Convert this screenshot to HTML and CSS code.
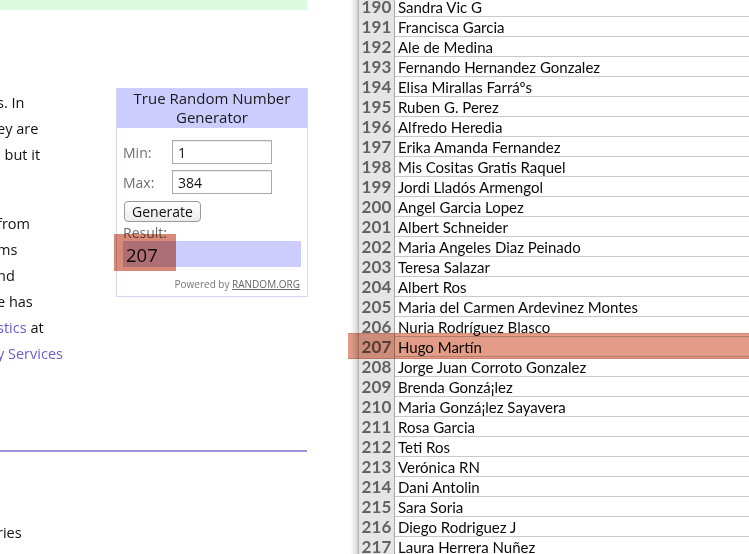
FILE: index.html
```html
<!DOCTYPE html>
<html lang="es">
<head>
<meta charset="utf-8">
<title>Sorteo</title>
<link rel="stylesheet" href="styles.css">
</head>
<body>
<div class="screen">
  <section class="page">
    <div class="notice"></div>
    <div class="page-body">
      <div class="prose">
        <p><span class="ln">s. In</span><span class="ln">ey are</span><span class="ln">, but it</span></p>
        <p><span class="ln">from</span><span class="ln">ms</span><span class="ln">nd</span><span class="ln">e has</span><span class="ln"><a href="#">stics</a> at</span><span class="ln"><a href="#">y Services</a></span></p>
      </div>
      <aside class="rng">
        <h3 class="rng-title">True Random Number Generator</h3>
        <div class="rng-body">
          <label class="rng-field"><span class="rng-label">Min:</span><input class="rng-input" type="text" value="1"></label>
          <label class="rng-field"><span class="rng-label">Max:</span><input class="rng-input" type="text" value="384"></label>
          <button class="rng-btn" type="button">Generate</button>
          <div class="rng-label rng-result-label">Result:</div>
          <div class="rng-result">207<span class="rng-mark"></span></div>
          <div class="rng-powered">Powered by <a href="#">RANDOM.ORG</a></div>
        </div>
      </aside>
    </div>
    <hr class="rule">
    <p class="tail">ries</p>
  </section>
  <div class="gutter"></div>
  <section class="sheet">
    <div class="row"><div class="num">190</div><div class="name">Sandra Vic G</div></div>
    <div class="row"><div class="num">191</div><div class="name">Francisca Garcia</div></div>
    <div class="row"><div class="num">192</div><div class="name">Ale de Medina</div></div>
    <div class="row"><div class="num">193</div><div class="name">Fernando Hernandez Gonzalez</div></div>
    <div class="row"><div class="num">194</div><div class="name">Elisa Mirallas Farráºs</div></div>
    <div class="row"><div class="num">195</div><div class="name">Ruben G. Perez</div></div>
    <div class="row"><div class="num">196</div><div class="name">Alfredo Heredia</div></div>
    <div class="row"><div class="num">197</div><div class="name">Erika Amanda Fernandez</div></div>
    <div class="row"><div class="num">198</div><div class="name">Mis Cositas Gratis Raquel</div></div>
    <div class="row"><div class="num">199</div><div class="name">Jordi Lladós Armengol</div></div>
    <div class="row"><div class="num">200</div><div class="name">Angel Garcia Lopez</div></div>
    <div class="row"><div class="num">201</div><div class="name">Albert Schneider</div></div>
    <div class="row"><div class="num">202</div><div class="name">Maria Angeles Diaz Peinado</div></div>
    <div class="row"><div class="num">203</div><div class="name">Teresa Salazar</div></div>
    <div class="row"><div class="num">204</div><div class="name">Albert Ros</div></div>
    <div class="row"><div class="num">205</div><div class="name">Maria del Carmen Ardevinez Montes</div></div>
    <div class="row"><div class="num">206</div><div class="name">Nuria Rodríguez Blasco</div></div>
    <div class="row"><div class="num">207</div><div class="name">Hugo Martín</div></div>
    <div class="row"><div class="num">208</div><div class="name">Jorge Juan Corroto Gonzalez</div></div>
    <div class="row"><div class="num">209</div><div class="name">Brenda Gonzá¡lez</div></div>
    <div class="row"><div class="num">210</div><div class="name">Maria Gonzá¡lez Sayavera</div></div>
    <div class="row"><div class="num">211</div><div class="name">Rosa Garcia</div></div>
    <div class="row"><div class="num">212</div><div class="name">Teti Ros</div></div>
    <div class="row"><div class="num">213</div><div class="name">Verónica RN</div></div>
    <div class="row"><div class="num">214</div><div class="name">Dani Antolin</div></div>
    <div class="row"><div class="num">215</div><div class="name">Sara Soria</div></div>
    <div class="row"><div class="num">216</div><div class="name">Diego Rodriguez J</div></div>
    <div class="row"><div class="num">217</div><div class="name">Laura Herrera Nuñez</div></div>
  </section>
  <div class="row-mark"></div>
</div>
</body>
</html>
```

FILE: styles.css
```css
* { box-sizing: border-box; }

html, body {
  margin: 0;
  padding: 0;
  background: #fff;
}

.screen {
  position: relative;
  display: flex;
  width: 749px;
  height: 554px;
  overflow: hidden;
  isolation: isolate;
}

/* ---------- left: web page ---------- */
.page {
  flex: 0 0 350px;
  font-family: "Open Sans", "DejaVu Sans", sans-serif;
  font-size: 14px;
  color: #111;
}

.notice {
  width: 307px;
  height: 10px;
  background: #dcfadc;
}

.page-body {
  display: flex;
  align-items: flex-start;
  padding-top: 78px;
}

.prose {
  width: 116px;
  margin-left: -3px;
  padding-top: 2px;
  line-height: 26px;
  white-space: nowrap;
  overflow: hidden;
  font-size: 14.5px;
}

.prose p { margin: 0 0 43px; }
.prose p:last-child { margin-bottom: 0; }

.ln { display: block; }

.prose a {
  color: #6a5ec6;
  text-decoration: none;
}

.rng {
  width: 192px;
  margin-left: 3px;
  border: 1px solid #d4d4f4;
  border-top: 0;
}

.rng-title {
  margin: 0;
  height: 40px;
  padding-top: 1px;
  background: #ccccff;
  font-size: 15px;
  font-weight: normal;
  line-height: 19px;
  text-align: center;
  color: #1a1a1a;
}

.rng-body {
  padding: 12px 5px 5px 6px;
}

.rng-field {
  display: flex;
  align-items: center;
  margin-bottom: 6px;
}

.rng-label {
  color: #6f6f6f;
  font-size: 14px;
  width: 49px;
}

.rng-input {
  width: 100px;
  height: 24px;
  border: 1px solid #aaa;
  padding: 0 5px;
  font: 14px "Open Sans", sans-serif;
  color: #111;
  box-shadow: inset 0 1px 1px rgba(0,0,0,0.08);
}

.rng-btn {
  height: 21px;
  width: 77px;
  margin: 1px 0 0 1px;
  border: 1px solid #9a9a9a;
  border-radius: 4px;
  background: linear-gradient(#ffffff, #ececec);
  font: 14px "Open Sans", sans-serif;
  color: #111;
  padding: 0;
  line-height: 18px;
}

.rng-result-label {
  line-height: 16px;
  margin-top: 3px;
}

.rng-result {
  position: relative;
  height: 26px;
  width: 178px;
  background: #ccccff;
  padding-left: 3px;
  font-size: 18.5px;
  line-height: 27px;
  color: #111;
}

/* highlight laid over the drawn number */
.rng-mark {
  position: absolute;
  left: -9px;
  top: -7px;
  width: 62px;
  height: 37px;
  background: #d98a76;
  mix-blend-mode: multiply;
}

.rng-powered {
  text-align: right;
  font-size: 10px;
  color: #777;
  margin: 10px 2px 0 0;
  line-height: 14px;
}

.rng-powered a {
  color: #666;
  text-decoration: underline;
}

.rule {
  width: 307px;
  height: 2px;
  border: 0;
  margin: 83px 0 0;
  background: #9d92d9;
}

.tail {
  margin: 68px 0 0 -3px;
  line-height: 26px;
  font-size: 14.5px;
}

/* ---------- gutter between windows ---------- */
.gutter {
  flex: 0 0 8px;
  background: linear-gradient(to right, #ffffff, #e9e9e9 60%, #cfcfcf);
}

/* ---------- right: spreadsheet ---------- */
.sheet {
  flex: 1;
  margin-top: -3px;
  font-family: "Lato", "Liberation Sans", sans-serif;
  border-left: 1px solid #b5b5b5;
}

.row {
  display: grid;
  grid-template-columns: 36px 1fr;
  height: 20px;
  border-bottom: 1px solid #c9c9c9;
}

.num {
  background: #e5e5e5;
  border-right: 1px solid #a9a9a9;
  color: #626262;
  font-weight: bold;
  font-size: 17px;
  line-height: 20px;
  text-align: center;
  letter-spacing: 0.2px;
}

.name {
  padding-left: 3px;
  font-size: 15px;
  line-height: 20px;
  color: #0a0a0a;
  white-space: nowrap;
}

/* highlight band across the winning row */
.row-mark {
  position: absolute;
  left: 348px;
  top: 333px;
  right: 0;
  height: 26px;
  background: #e29c87;
  border-top: 1px solid #d58a74;
  border-bottom: 1px solid #cf826b;
  mix-blend-mode: multiply;
}
```
